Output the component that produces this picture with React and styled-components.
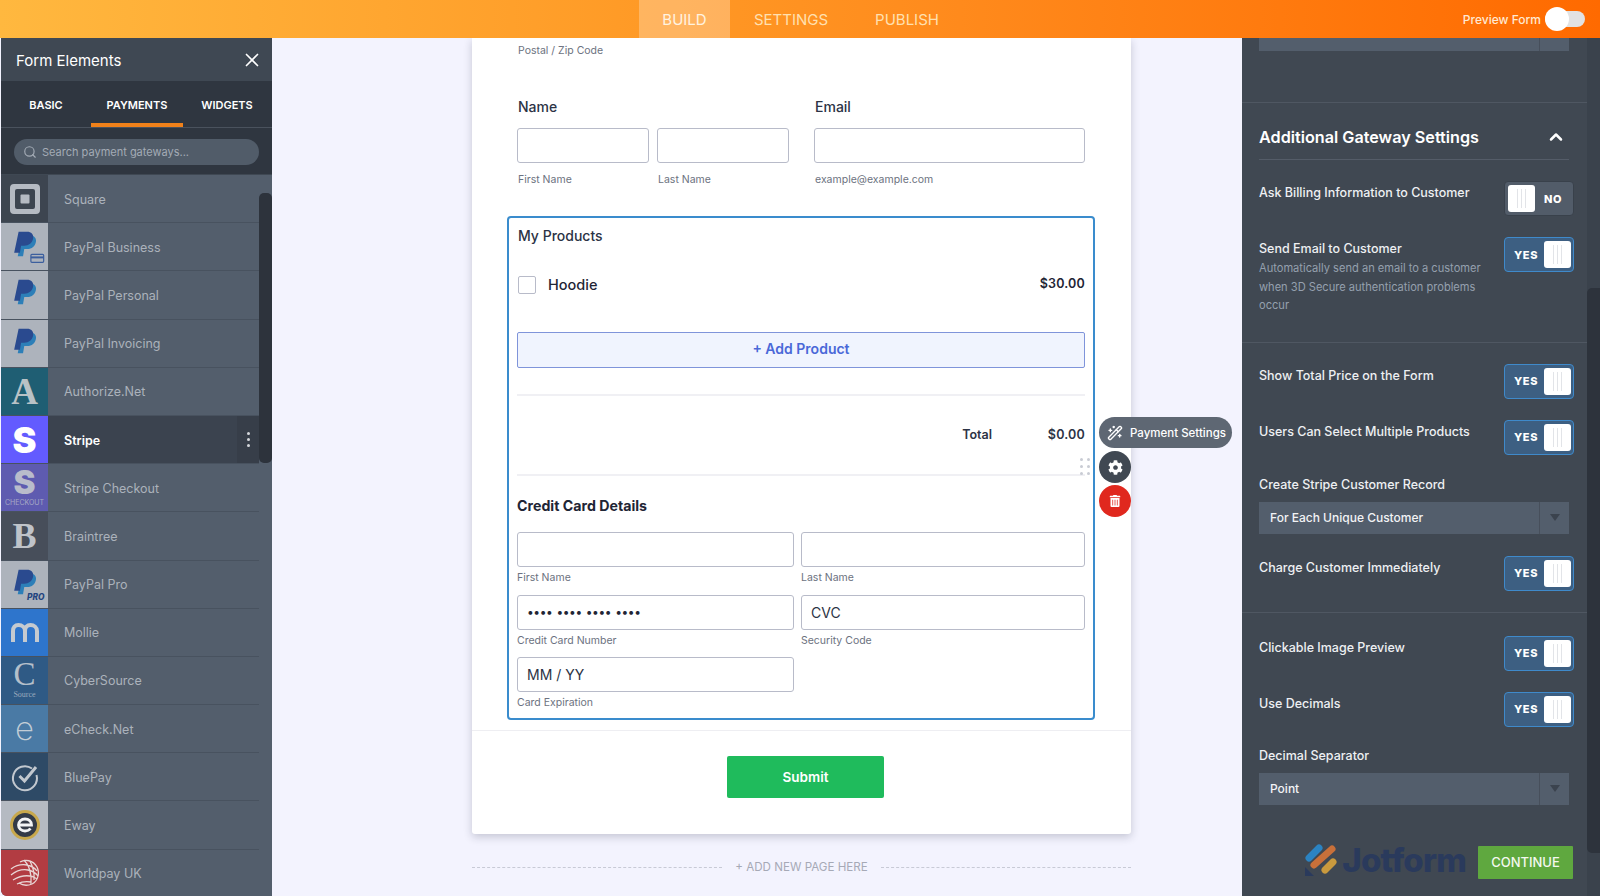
import React from 'react';
import styled, { createGlobalStyle } from 'styled-components';
import { Search, X, ChevronUp, WandSparkles } from 'lucide-react';
import { FaCog, FaTrashAlt } from 'react-icons/fa';

const Global = createGlobalStyle`
  html, body { margin: 0; padding: 0; height: 896px; overflow: hidden; background: #f3f3fe; }
  * { box-sizing: border-box; }
  body { font-family: Inter, "Liberation Sans", sans-serif; }
`

const Page = styled.div`
  width: 1600px;
  height: 896px;
  display: flex;
  flex-direction: column;
  overflow: hidden;
`

const TopBar = styled.header`
  height: 38px;
  flex: none;
  display: flex;
  position: relative;
  z-index: 3;
  padding-left: 639px;
  background: linear-gradient(90deg, #ffb83f 0%, #ff9a26 40%, #ff8a1c 60%, #ff6a00 100%);
`

const TopTab = styled.div`
  height: 38px;
  width: ${p => p.$w}px;
  display: flex;
  align-items: center;
  justify-content: center;
  font-size: 15px;
  color: ${p => p.$active ? '#fff3e0' : '#ffe0b0'};
  background: ${p => p.$active ? 'rgba(255,255,255,.27)' : 'transparent'};
`

const Preview = styled.div`
  margin-left: auto;
  padding-right: 15px;
  display: flex;
  align-items: center;
  gap: 4px;
  font-size: 12px;
  font-weight: 500;
  color: #ffe9d2;
`

const PreviewSwitch = styled.div`
  width: 40px;
  height: 16px;
  border-radius: 8px;
  background: #e2e2e2;
  display: flex;
  align-items: center;
`

const PreviewKnob = styled.div`
  width: 24px;
  height: 24px;
  border-radius: 50%;
  background: #fff;
`

const Body = styled.div`
  flex: 1;
  min-height: 0;
  display: flex;
`

/* left panel */
const Left = styled.aside`
  width: 271px;
  margin-left: 1px;
  flex: none;
  display: flex;
  flex-direction: column;
  background: #535e6c;
  border-bottom-left-radius: 6px;
  overflow: hidden;
`

const LeftHead = styled.div`
  height: 43px;
  flex: none;
  padding: 1px 9px 0 15px;
  display: flex;
  align-items: center;
  justify-content: space-between;
  background: #3f4853;
  color: #fff;
  font-size: 15px;
`

const Tabs = styled.div`
  height: 47px;
  flex: none;
  display: flex;
  padding-left: 9px;
  background: #2f3640;
  border-bottom: 1px solid #4a525d;
`

const Tab = styled.div`
  width: ${p => p.$w}px;
  margin-right: ${p => p.$mr || 0}px;
  display: flex;
  align-items: center;
  justify-content: center;
  color: #fff;
  font-size: 11px;
  font-weight: 600;
  border-bottom: 4px solid ${p => p.$active ? '#f0811a' : 'transparent'};
  padding-top: 6px;
`

const SearchWrap = styled.div`
  height: 47px;
  flex: none;
  padding: 11px 13px 9px;
  background: #2f3640;
  border-bottom: 1px solid #3f4853;
`

const SearchBox = styled.div`
  height: 26px;
  border-radius: 13px;
  background: #515c69;
  padding-left: 9px;
  display: flex;
  align-items: center;
  gap: 5px;
  color: #a3abb5;
  font-size: 11px;
`

const ListWrap = styled.div`
  flex: 1;
  min-height: 0;
  display: flex;
`

const List = styled.div`
  width: 258px;
  flex: none;
`

const Row = styled.div`
  height: 48.2px;
  display: flex;
  align-items: stretch;
  background: ${p => p.$active ? '#3b434f' : 'transparent'};
  border-bottom: 1px solid #48525f;
`

const IconCell = styled.div`
  width: 47px;
  flex: none;
  display: flex;
  flex-direction: column;
  align-items: center;
  justify-content: center;
  background: ${p => p.$bg};
  color: ${p => p.$fg};
`

const RowName = styled.div`
  flex: 1;
  padding: 1px 0 0 16px;
  display: flex;
  align-items: center;
  font-size: 12.5px;
  color: ${p => p.$active ? '#fff' : '#abb2bb'};
  font-weight: ${p => p.$active ? 600 : 400};
`

const Kebab = styled.div`
  width: 22px;
  flex: none;
  background: #373e49;
  display: flex;
  flex-direction: column;
  align-items: center;
  justify-content: center;
  gap: 3px;
  span { width: 3px; height: 3px; border-radius: 50%; background: #d5d8dc; }
`

const Letter = styled.div`
  font-family: ${p => p.$serif ? '"Liberation Serif", serif' : 'Inter, sans-serif'};
  font-size: ${p => p.$size}px;
  font-weight: ${p => p.$weight || 700};
  line-height: ${p => p.$lh || 1};
`

const Tiny = styled.div`
  font-family: ${p => p.$serif ? '"Liberation Serif", serif' : 'Inter, sans-serif'};
  font-size: ${p => p.$size || 7}px;
  line-height: 8px;
  margin-top: 3px;
  opacity: .8;
`

const ScrollTrack = styled.div`
  width: 13px;
  flex: none;
`

const ScrollThumb = styled.div`
  width: 13px;
  height: 270px;
  margin-top: ${p => p.$top}px;
  border-radius: 5px;
  background: #2d333c;
`

/* centre canvas */
const Canvas = styled.main`
  flex: 1;
  min-width: 0;
  padding-left: 200px;
  background: #f3f3fe;
  overflow: hidden;
`

const Card = styled.section`
  width: 659px;
  background: #fff;
  box-shadow: 0 3px 8px rgba(30,35,60,.22);
  border-radius: 0 0 3px 3px;
`

const CardBody = styled.div`
  padding: 6px 46px 10px 45px;
`

const Sub = styled.div`
  font-size: 10.5px;
  line-height: 14px;
  color: #6c7280;
  padding-left: ${p => p.$pl || 0}px;
`

const NameGrid = styled.div`
  display: grid;
  grid-template-columns: 132px 132px 288px;
  column-gap: 8px;
  margin-top: 40px;
`

const TopLabel = styled.div`
  grid-column: ${p => p.$span};
  margin-left: ${p => p.$ml || 0}px;
  font-size: 14px;
  font-weight: 500;
  line-height: 18px;
  color: #2c3345;
  padding-left: 1px;
  margin-bottom: 12px;
`

const NameSub = styled(Sub)`
  margin-top: 10px;
  margin-left: ${p => p.$ml || 0}px;
  padding-left: 1px;
`

const Input = styled.div`
  height: 35px;
  margin-left: ${p => p.$ml || 0}px;
  border: 1px solid #b8bbc9;
  border-radius: 3px;
  background: #fff;
  padding-left: 9px;
  display: flex;
  align-items: center;
  color: #2c3345;
  font-size: 14px;
`

const Products = styled.div`
  margin: 29px -10px 0;
  padding: 9px 8px 8px;
  border: 2px solid #3a8ccd;
  border-radius: 4px;
`

const ProductsTitle = styled.div`
  font-size: 14px;
  font-weight: 500;
  line-height: 18px;
  color: #2c3345;
  padding-left: 1px;
`

const ProductRow = styled.div`
  margin-top: 31px;
  height: 18px;
  padding-left: 1px;
  display: flex;
  align-items: center;
`

const Check = styled.div`
  width: 18px;
  height: 18px;
  border: 1px solid #b8bbc9;
  border-radius: 2px;
  margin-right: 12px;
`

const ProductName = styled.div`
  font-size: 14.5px;
  font-weight: 500;
  color: #1f2535;
  margin-top: -2px;
`

const Price = styled.div`
  margin-left: auto;
  font-size: 12.5px;
  font-weight: 600;
  letter-spacing: .2px;
  color: #1f2535;
  margin-top: -4px;
`

const AddProduct = styled.div`
  margin-top: 38px;
  height: 36px;
  display: flex;
  align-items: center;
  justify-content: center;
  padding-bottom: 3px;
  background: #f0f4fe;
  border: 1px solid #7f94da;
  border-radius: 2px;
  color: #4a68d8;
  font-size: 14px;
  font-weight: 600;
`

const Rule = styled.div`
  height: 2px;
  background: #f0f0f4;
  margin-top: ${p => p.$mt}px;
`

const TotalRow = styled.div`
  margin-top: 30px;
  height: 16px;
  display: flex;
  justify-content: flex-end;
  align-items: center;
  font-size: 12.5px;
  font-weight: 600;
  color: #2c3345;
`

const TotalValue = styled.span`
  width: 93px;
  text-align: right;
  font-size: 12.5px;
  letter-spacing: .2px;
`

const CardTitle = styled.div`
  margin-top: 21px;
  font-size: 14.2px;
  font-weight: 700;
  line-height: 18px;
  color: #1f2535;
`

const CardGrid = styled.div`
  margin-top: 17px;
  display: grid;
  grid-template-columns: 277px 284px;
  column-gap: 7px;
  row-gap: 9.5px;
`

const CardField = styled.div`
  display: flex;
  flex-direction: column;
  gap: 4px;
`

const Dots = styled.span`
  font-size: 12px;
  letter-spacing: -.4px;
  word-spacing: 1px;
  line-height: 1;
  color: #1f2535;
`

const Floating = styled.div`
  position: relative;
  height: 0;
`

const Grip = styled.div`
  position: absolute;
  left: 563px;
  top: -18px;
  display: grid;
  grid-template-columns: 3px 3px;
  gap: 4px;
  span { width: 3px; height: 3px; border-radius: 50%; background: #c9ccd4; }
`

const Pill = styled.div`
  position: absolute;
  left: 582px;
  top: -59px;
  width: 133px;
  height: 31px;
  border-radius: 16px;
  background: #5e6773;
  color: #fff;
  display: flex;
  align-items: center;
  gap: 7px;
  padding-left: 8px;
  font-size: 11.5px;
  font-weight: 500;
  white-space: nowrap;
`

const RoundBtn = styled.div`
  position: absolute;
  left: 582px;
  top: ${p => p.$top}px;
  width: 32px;
  height: 32px;
  border-radius: 50%;
  background: ${p => p.$bg};
  color: #fff;
  display: flex;
  align-items: center;
  justify-content: center;
`

const CardFoot = styled.div`
  border-top: 1px solid #eeeef2;
  padding: 25px 0 36px 8px;
  display: flex;
  justify-content: center;
`

const Submit = styled.div`
  width: 157px;
  height: 42px;
  border-radius: 2px;
  background: #1fbb5c;
  color: #fff;
  font-size: 13.5px;
  font-weight: 600;
  display: flex;
  align-items: center;
  justify-content: center;
`

const AddPage = styled.div`
  width: 659px;
  margin-top: 26px;
  display: flex;
  align-items: center;
  gap: 13px;
  font-size: 11.6px;
  line-height: 14px;
  color: #a6a9b6;
  white-space: nowrap;
  &::before, &::after {
    content: '';
    flex: 1;
    border-top: 1px dashed #c8cad6;
  }
`

/* right panel */
const Right = styled.aside`
  width: 358px;
  flex: none;
  display: flex;
  background: #404852;
`

const Settings = styled.div`
  width: 345px;
  flex: none;
`

const Section = styled.div`
  padding: ${p => p.$pad};
  border-bottom: ${p => p.$line ? '1px solid #4f5762' : 'none'};
`

const Select = styled.div`
  width: 310px;
  height: ${p => p.$h || 32}px;
  margin-top: ${p => p.$mt || 0}px;
  display: flex;
  align-items: center;
  background: #535e6c;
  color: #f2f3f5;
  font-size: 12px;
  font-weight: 500;
`

const SelectText = styled.div`
  flex: 1;
  height: 100%;
  display: flex;
  align-items: center;
  padding-left: 11px;
  border-right: 1px solid #474f5b;
`

const SelectArrow = styled.div`
  width: 29px;
  display: flex;
  justify-content: center;
  &::after {
    content: '';
    border-left: 5px solid transparent;
    border-right: 5px solid transparent;
    border-top: 7px solid #3b434e;
  }
`

const SelectEnd = styled.div`
  width: 29px;
`

const HeadRow = styled.div`
  height: 57px;
  margin-right: 18px;
  display: flex;
  align-items: center;
  justify-content: space-between;
  border-bottom: 1px solid #545c68;
  color: #fff;
  font-size: 16.2px;
  font-weight: 600;
  padding-top: 17px;
  padding-right: 3px;
  padding-bottom: 6px;
`

const Option = styled.div`
  display: flex;
  justify-content: space-between;
  margin-top: ${p => p.$mt ?? 21}px;
  padding-right: 13px;
`

const OptionLabel = styled.div`
  font-size: 12.5px;
  font-weight: 500;
  line-height: 16px;
  padding-top: 4px;
  color: #eef0f2;
`

const OptionDesc = styled.div`
  width: 232px;
  margin-top: 2px;
  font-size: 11.1px;
  font-weight: 400;
  line-height: 18.5px;
  color: #95a0ae;
`

const FieldLabel = styled.div`
  margin-top: ${p => p.$mt}px;
  font-size: 12.5px;
  font-weight: 500;
  line-height: 16px;
  color: #eef0f2;
`

const Toggle = styled.div`
  width: 70px;
  height: 35px;
  flex: none;
  border-radius: 4px;
  padding: 3px 2px 3px 3px;
  display: flex;
  align-items: stretch;
  justify-content: space-between;
  flex-direction: ${p => p.$on ? 'row' : 'row-reverse'};
  background: ${p => p.$on ? '#3d5f82' : '#525c69'};
  border: 1px solid ${p => p.$on ? '#3f8acb' : '#39414b'};
`

const ToggleText = styled.div`
  flex: 1;
  display: flex;
  align-items: center;
  justify-content: center;
  color: #fff;
  font-size: 11px;
  font-weight: 800;
  letter-spacing: .6px;
`

const Knob = styled.div`
  width: 27px;
  border-radius: 3px;
  background: #fff;
  display: flex;
  justify-content: center;
  align-items: stretch;
  gap: 3px;
  padding: 4px 0;
  span { width: 1px; background: #e2e4e8; }
`

const Foot = styled.div`
  margin-top: 41px;
  padding-right: 14px;
  display: flex;
  align-items: center;
  justify-content: flex-end;
`

const Jot = styled.div`
  display: flex;
  align-items: center;
  gap: 5px;
  margin-right: 12px;
  margin-top: -4px;
  color: #2a3a5c;
  font-size: 33px;
  font-weight: 800;
  letter-spacing: -.8px;
  line-height: 1;
`

const Continue = styled.div`
  width: 95px;
  height: 33px;
  background: #5fa83f;
  color: #f4f8ef;
  font-size: 13px;
  font-weight: 500;
  border-radius: 1px;
  display: flex;
  align-items: center;
  justify-content: center;
`

const RightTrack = styled.div`
  width: 13px;
  flex: none;
  background: #3a424c;
`

const RightThumb = styled.div`
  width: 13px;
  height: 565px;
  margin-top: 250px;
  border-radius: 5px 0 0 5px;
  background: #2d333c;
`

const PayPal = ({ badge }) => (
  <svg width="47" height="48" viewBox="0 0 47 48">
    <g transform="translate(7.600 5.400) scale(.9)">
      <path fill="#2d7fb8" d="M15 8h9c4.600 0 7.300 2.900 6.600 7.200-.8 5-4.600 8.300-9.800 8.300h-3.400l-1.400 8.200H10z" />
      <path fill="#2a4a8f" d="M11 4h9.600c4.700 0 7.600 2.900 6.800 7.400-.9 5-4.800 8.200-10 8.200h-3.600l-1.300 8H6z" />
    </g>
    {badge === 'card' && (
      <g fill="none" stroke="#3c5f9e" strokeWidth="1.200">
        <rect x="30" y="32" width="13" height="8" rx="1" />
        <path d="M30 35h13" strokeWidth="2" />
      </g>
    )}
    {badge === 'pro' && <text x="26" y="40" fontFamily="Inter, sans-serif" fontSize="8.500" fontWeight="800" fontStyle="italic" fill="#24457f">PRO</text>}
  </svg>
)

const gateways = [
  { name: 'Square', bg: '#3d4550', icon: (
    <svg width="32" height="32" viewBox="0 0 32 32"><path fill="#b5bac2" fillRule="evenodd" d="M5 1h22a4 4 0 0 1 4 4v22a4 4 0 0 1-4 4H5a4 4 0 0 1-4-4V5a4 4 0 0 1 4-4zm3 5a2 2 0 0 0-2 2v16a2 2 0 0 0 2 2h16a2 2 0 0 0 2-2V8a2 2 0 0 0-2-2z" /><rect x="11.500" y="11.500" width="9" height="9" rx="1" fill="#b5bac2" /></svg>
  ) },
  { name: 'PayPal Business', bg: '#adb3bc', icon: <PayPal badge="card" /> },
  { name: 'PayPal Personal', bg: '#adb3bc', icon: <PayPal /> },
  { name: 'PayPal Invoicing', bg: '#adb3bc', icon: <PayPal /> },
  { name: 'Authorize.Net', bg: '#1f5e73', fg: '#b9c2c6', icon: <Letter $serif $size={37}>A</Letter> },
  { name: 'Stripe', bg: '#635bff', fg: '#fff', active: true, icon: <Letter $size={36} $weight={900}>S</Letter> },
  { name: 'Stripe Checkout', bg: '#5e5bb0', fg: '#b9bccb', icon: <><Letter $size={33} $weight={900} $lh={.82}>S</Letter><Tiny>CHECKOUT</Tiny></> },
  { name: 'Braintree', bg: '#474e5a', fg: '#bfc3c9', icon: <Letter $serif $size={36}>B</Letter> },
  { name: 'PayPal Pro', bg: '#adb3bc', icon: <PayPal badge="pro" /> },
  { name: 'Mollie', bg: '#2e75cc', icon: (
    <svg width="30" height="20" viewBox="0 0 30 20"><path fill="none" stroke="#c5cad0" strokeWidth="4" d="M3 20V9c0-3.500 2-6 5.500-6S15 5.500 15 9v11M15 9c0-3.500 2-6 5.500-6S27 5.500 27 9v11" /></svg>
  ) },
  { name: 'CyberSource', bg: '#2f5a85', fg: '#b4bfca', icon: <><Letter $serif $size={33} $weight={400} $lh={.82}>C</Letter><Tiny $serif $size={8}>Source</Tiny></> },
  { name: 'eCheck.Net', bg: '#4a7aa5', fg: '#c3cdd6', icon: <Letter $size={33} $weight={200}>e</Letter> },
  { name: 'BluePay', bg: '#2e4a66', icon: (
    <svg width="30" height="30" viewBox="0 0 30 30" fill="none" stroke="#c2c8cf"><path strokeWidth="2" d="M22 6.500A12 12 0 1 0 26.500 13" /><path strokeWidth="3" d="M9.500 14l5 5L26 5" /></svg>
  ) },
  { name: 'Eway', bg: '#b5bac2', icon: (
    <svg width="30" height="30" viewBox="0 0 30 30"><circle cx="15" cy="15" r="13.500" fill="#343b47" stroke="#c8a84c" strokeWidth="3" /><path fill="none" stroke="#f3f4f5" strokeWidth="2.800" d="M8.500 15h13c0-3.800-2.800-6-6.500-6s-6.500 2.700-6.500 6 2.800 6 6.500 6c2.300 0 4.200-.8 5.500-2.500" /></svg>
  ) },
  { name: 'Worldpay UK', bg: '#b23c42', icon: (
    <svg width="30" height="30" viewBox="0 0 30 30" fill="none" stroke="#e8d5d5" strokeWidth="1.300"><path d="M10 4c5-3 13-2 17 5 3 6 1 14-5 17-5 2-10 1-13-1" /><path d="M1 11c4-3 10-5 16-4 4 1 8 3 10 6M1 17c5-4 11-6 17-5 4 1 8 3 10 6M3 22c5-3 11-5 17-4 3 0 5 2 7 3M7 26c4-2 9-3 14-2M14 2c4 4 8 11 7 24M20 3c2 4 5 10 4 19" /></svg>
  ) },
]

const NameRow = ({ g }) => (
  <Row $active={g.active}>
    <IconCell $bg={g.bg} $fg={g.fg}>{g.icon}</IconCell>
    <RowName $active={g.active}>{g.name}</RowName>
    {g.active && <Kebab><span /><span /><span /></Kebab>}
  </Row>
)

const YesNo = ({ on }) => (
  <Toggle $on={on}>
    <ToggleText>{on ? 'YES' : 'NO'}</ToggleText>
    <Knob><span /><span /><span /></Knob>
  </Toggle>
)

const Opt = ({ label, desc, on = true, mt }) => (
  <Option $mt={mt}>
    <OptionLabel>
      {label}
      {desc && <OptionDesc>{desc}</OptionDesc>}
    </OptionLabel>
    <YesNo on={on} />
  </Option>
)

const App = () => (
  <Page>
    <Global />
    <TopBar>
      <TopTab $w={91} $active>BUILD</TopTab>
      <TopTab $w={122}>SETTINGS</TopTab>
      <TopTab $w={110}>PUBLISH</TopTab>
      <Preview>
        Preview Form
        <PreviewSwitch><PreviewKnob /></PreviewSwitch>
      </Preview>
    </TopBar>
    <Body>
      <Left>
        <LeftHead>
          Form Elements
          <X size={22} strokeWidth={1.8} />
        </LeftHead>
        <Tabs>
          <Tab $w={72} $mr={9}>BASIC</Tab>
          <Tab $w={92} $active>PAYMENTS</Tab>
          <Tab $w={88}>WIDGETS</Tab>
        </Tabs>
        <SearchWrap>
          <SearchBox>
            <Search size={14} color="#a3abb5" />
            Search payment gateways...
          </SearchBox>
        </SearchWrap>
        <ListWrap>
          <List>{gateways.map(g => <NameRow key={g.name} g={g} />)}</List>
          <ScrollTrack><ScrollThumb $top={18} /></ScrollTrack>
        </ListWrap>
      </Left>

      <Canvas>
        <Card>
          <CardBody>
            <Sub $pl={1}>Postal / Zip Code</Sub>
            <NameGrid>
              <TopLabel $span="1 / span 2">Name</TopLabel>
              <TopLabel $span="3" $ml={17}>Email</TopLabel>
              <Input />
              <Input />
              <Input $ml={17} />
              <NameSub>First Name</NameSub>
              <NameSub>Last Name</NameSub>
              <NameSub $ml={17}>example@example.com</NameSub>
            </NameGrid>
            <Products>
              <ProductsTitle>My Products</ProductsTitle>
              <ProductRow>
                <Check />
                <ProductName>Hoodie</ProductName>
                <Price>$30.00</Price>
              </ProductRow>
              <AddProduct>+ Add Product</AddProduct>
              <Rule $mt={26} />
              <TotalRow>Total<TotalValue>$0.00</TotalValue></TotalRow>
              <Rule $mt={32} />
              <Floating>
                <Grip><span /><span /><span /><span /><span /><span /></Grip>
                <Pill><WandSparkles size={16} />Payment Settings</Pill>
                <RoundBtn $top={-25} $bg="#404852"><FaCog size={15} /></RoundBtn>
                <RoundBtn $top={9} $bg="#e0281e"><FaTrashAlt size={12} /></RoundBtn>
              </Floating>
              <CardTitle>Credit Card Details</CardTitle>
              <CardGrid>
                <CardField><Input /><Sub>First Name</Sub></CardField>
                <CardField><Input /><Sub>Last Name</Sub></CardField>
                <CardField><Input><Dots>•••• •••• •••• ••••</Dots></Input><Sub>Credit Card Number</Sub></CardField>
                <CardField><Input>CVC</Input><Sub>Security Code</Sub></CardField>
                <CardField><Input>MM / YY</Input><Sub>Card Expiration</Sub></CardField>
              </CardGrid>
            </Products>
          </CardBody>
          <CardFoot><Submit>Submit</Submit></CardFoot>
        </Card>
        <AddPage>+ ADD NEW PAGE HERE</AddPage>
      </Canvas>

      <Right>
        <Settings>
          <Section $pad="0 0 51px 17px" $line>
            <Select $h={13}><SelectText /><SelectEnd /></Select>
          </Section>
          <Section $pad="0 0 27px 17px" $line>
            <HeadRow>
              Additional Gateway Settings
              <ChevronUp size={20} strokeWidth={3} />
            </HeadRow>
            <Opt label="Ask Billing Information to Customer" on={false} />
            <Opt
              label="Send Email to Customer"
              desc="Automatically send an email to a customer when 3D Secure authentication problems occur"
            />
          </Section>
          <Section $pad="21px 0 21px 17px" $line>
            <Opt label="Show Total Price on the Form" mt={0} />
            <Opt label="Users Can Select Multiple Products" />
            <FieldLabel $mt={22}>Create Stripe Customer Record</FieldLabel>
            <Select $mt={9}><SelectText>For Each Unique Customer</SelectText><SelectArrow /></Select>
            <Opt label="Charge Customer Immediately" mt={22} />
          </Section>
          <Section $pad="23px 0 0 17px">
            <Opt label="Clickable Image Preview" mt={0} />
            <Opt label="Use Decimals" />
            <FieldLabel $mt={21}>Decimal Separator</FieldLabel>
            <Select $mt={9}><SelectText>Point</SelectText><SelectArrow /></Select>
            <Foot>
              <Jot>
                <svg width="32" height="32" viewBox="0 0 32 32" fill="none" strokeLinecap="round" strokeWidth="7">
                  <path stroke="#2b83c2" d="M4 14L14 4" />
                  <path stroke="#c8703a" d="M9 21L27 5" />
                  <path stroke="#c99a3e" d="M20 26L28 18" />
                  <path fill="#2a3a5c" d="M0 23v9h9z" strokeWidth="0" />
                </svg>
                Jotform
              </Jot>
              <Continue>CONTINUE</Continue>
            </Foot>
          </Section>
        </Settings>
        <RightTrack><RightThumb /></RightTrack>
      </Right>
    </Body>
  </Page>
)

export default App
